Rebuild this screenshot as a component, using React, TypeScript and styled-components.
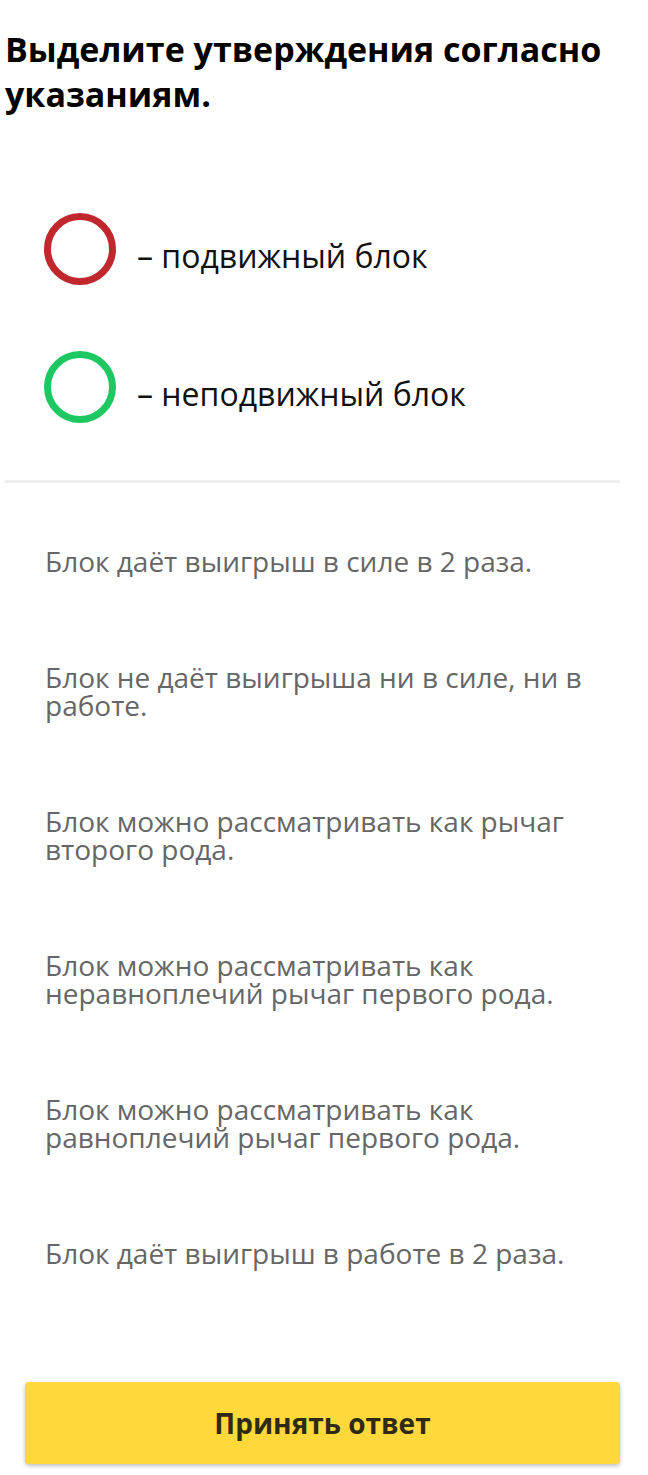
import React from "react";
import styled, { createGlobalStyle } from "styled-components";

const Global = createGlobalStyle`
  html, body { margin: 0; padding: 0; background: #fff; }
  body { font-family: "Open Sans", "Noto Sans", sans-serif; }
  * { box-sizing: border-box; }
`;

const Page = styled.div`
  width: 648px;
  min-height: 1475px;
  padding: 27px 28px 0 5px;
  display: flex;
  flex-direction: column;
`;

const Title = styled.h1`
  margin: 0;
  font-size: 34px;
  line-height: 45px;
  font-weight: 700;
  color: #000;
`;

const Legend = styled.div`
  display: flex;
  flex-direction: column;
  gap: 66px;
  margin-top: 96px;
  padding-left: 39px;
`;

const LegendRow = styled.div`
  display: flex;
  align-items: center;
  gap: 21px;
  height: 72px;
`;

const Ring = styled.span<{ $color: string }>`
  width: 72px;
  height: 72px;
  border-radius: 50%;
  border: 7px solid ${(p) => p.$color};
  flex: none;
`;

const LegendText = styled.span`
  font-size: 32px;
  color: #111;
  padding-top: 13px;
`;

const Divider = styled.hr`
  margin: 57px 0 0 0;
  border: none;
  height: 3px;
  background: #eeeeee;
`;

const List = styled.div`
  display: flex;
  flex-direction: column;
  gap: 88px;
  padding: 64px 0 0 40px;
`;

const Statement = styled.div`
  font-size: 28px;
  line-height: 28px;
  color: #666;
  max-width: 565px;
`;

const Button = styled.button`
  margin: 115px 0 0 20px;
  height: 82px;
  border: none;
  border-radius: 4px;
  background: #ffd83c;
  box-shadow: 0 2px 4px rgba(0, 0, 0, 0.25);
  font-family: "Open Sans", "Noto Sans", sans-serif;
  font-size: 28px;
  font-weight: 700;
  color: #2f2a14;
`;

const statements = [
  "Блок даёт выигрыш в силе в 2 раза.",
  "Блок не даёт выигрыша ни в силе, ни в работе.",
  "Блок можно рассматривать как рычаг второго рода.",
  "Блок можно рассматривать как неравноплечий рычаг первого рода.",
  "Блок можно рассматривать как равноплечий рычаг первого рода.",
  "Блок даёт выигрыш в работе в 2 раза.",
];

export default function App() {
  return (
    <Page>
      <Global />
      <Title>Выделите утверждения согласно указаниям.</Title>
      <Legend>
        <LegendRow>
          <Ring $color="#c0282d" />
          <LegendText>– подвижный блок</LegendText>
        </LegendRow>
        <LegendRow>
          <Ring $color="#1dc863" />
          <LegendText>– неподвижный блок</LegendText>
        </LegendRow>
      </Legend>
      <Divider />
      <List>
        {statements.map((s) => (
          <Statement key={s}>{s}</Statement>
        ))}
      </List>
      <Button>Принять ответ</Button>
    </Page>
  );
}
